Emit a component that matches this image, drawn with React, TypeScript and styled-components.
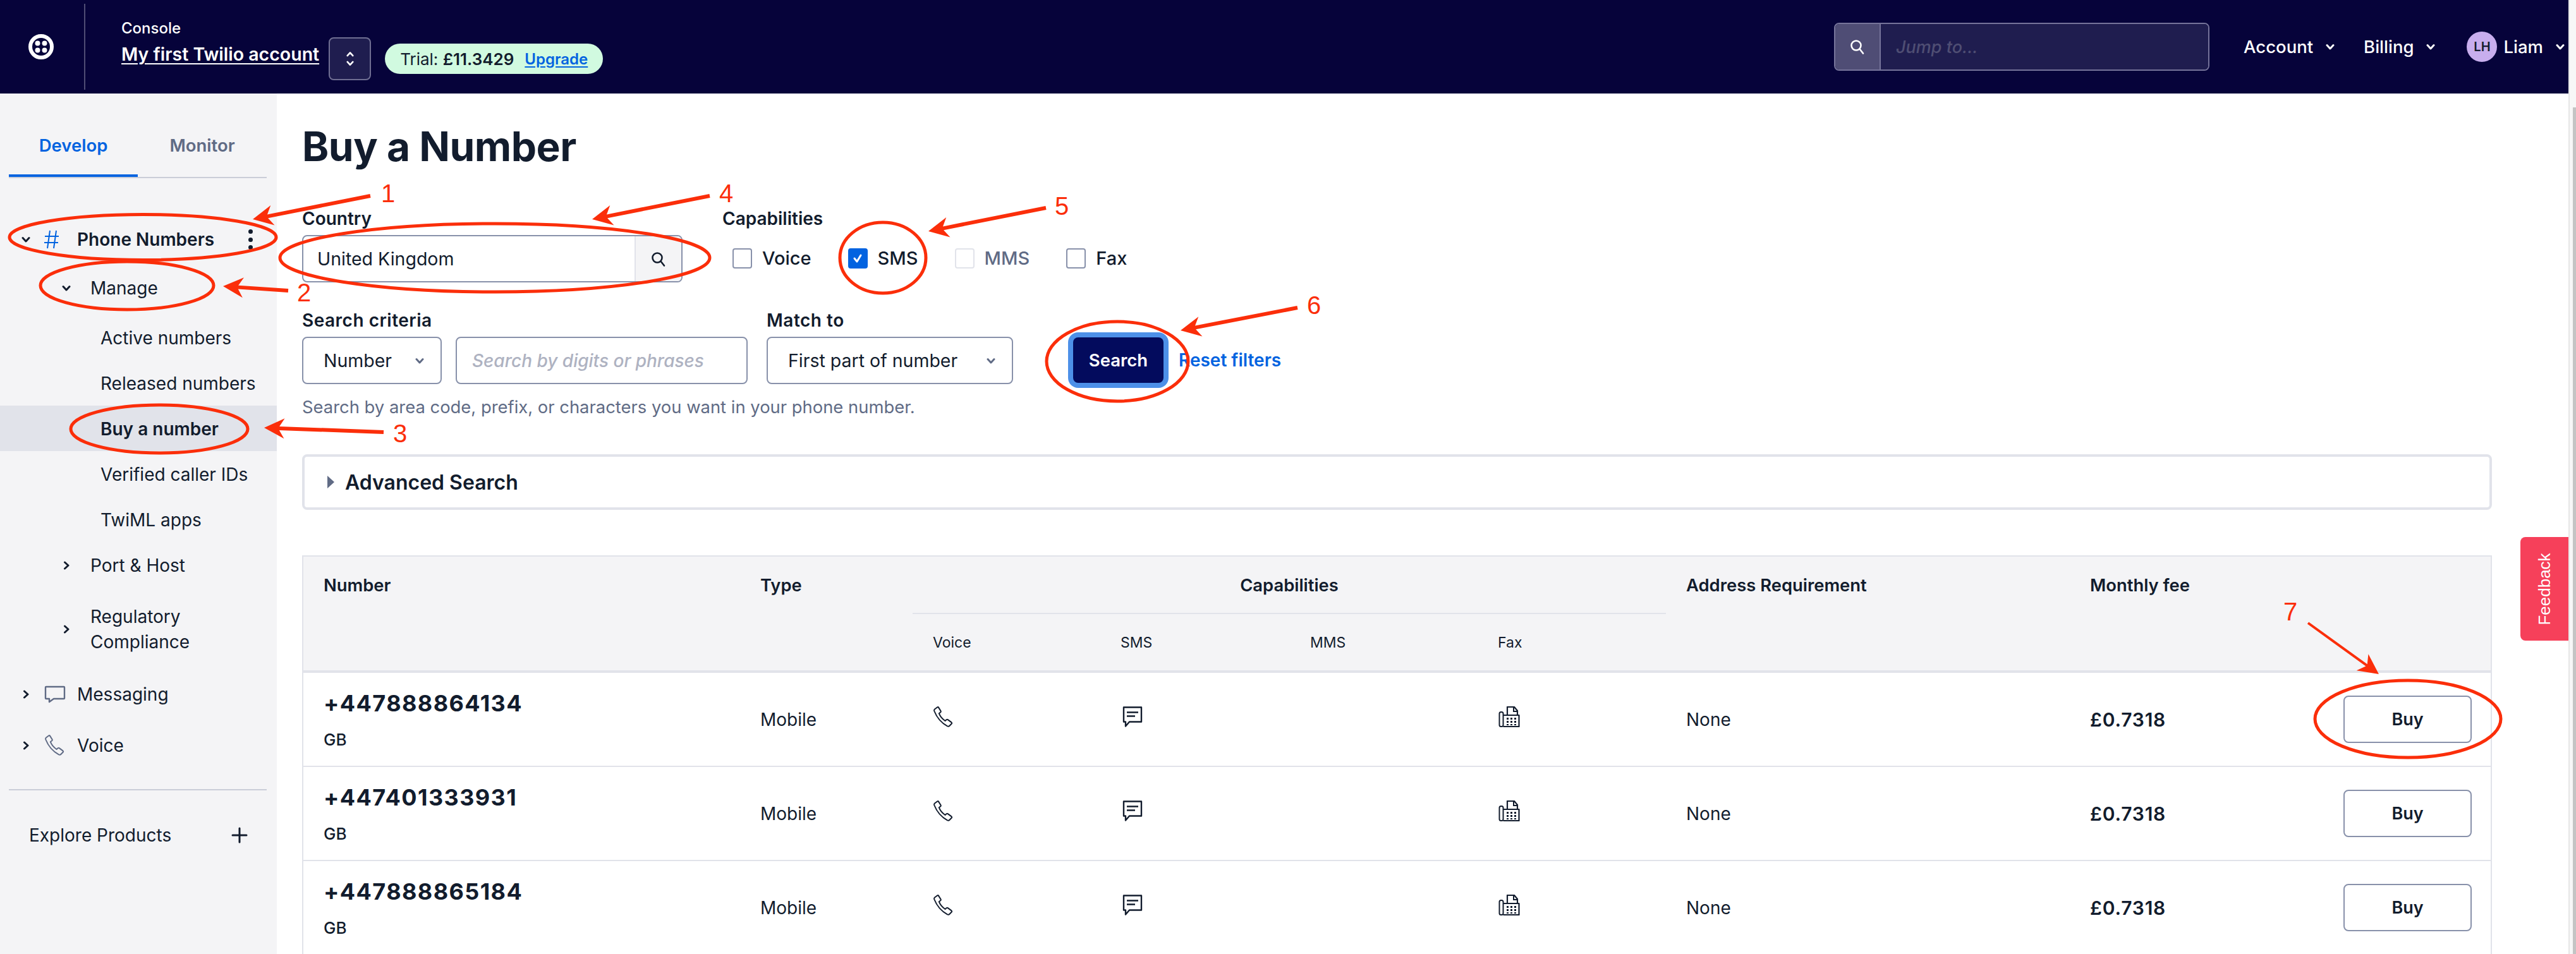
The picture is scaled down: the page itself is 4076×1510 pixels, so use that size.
import React from 'react'
import styled, { createGlobalStyle } from 'styled-components'

const GlobalStyle = createGlobalStyle`
  html, body {
    margin: 0;
    padding: 0;
    background: #fff;
    overflow: hidden;
  }
  * {
    box-sizing: border-box;
  }
  body {
    font-family: 'Inter', 'Noto Sans', sans-serif;
    color: #121c2d;
  }
`

const INK = '#121c2d'
const SLATE = '#606b85'
const LINE = '#e1e3ea'
const FIELD = '#8891aa'
const BLUE = '#0263e0'
const RED = '#fb2e0a'

type IconProps = { color?: string; size?: number }

const Chevron = ({ dir = 'down', color = INK, size = 14 }: IconProps & { dir?: 'down' | 'right' | 'up' }) => {
  const d = dir === 'down' ? 'M2 4.5 7 10l5-5.5' : dir === 'up' ? 'M2 9.5 7 4l5 5.5' : 'M4.5 2 10 7l-5.5 5'
  return (
    <svg width={size} height={size} viewBox="0 0 14 14" fill="none">
      <path d={d} stroke={color} strokeWidth="3" strokeLinecap="round" strokeLinejoin="round" />
    </svg>
  )
}

const SearchIcon = ({ color = INK, size = 26 }: IconProps) => (
  <svg width={size} height={size} viewBox="0 0 26 26" fill="none">
    <circle cx="11" cy="11" r="7.5" stroke={color} strokeWidth="2.6" />
    <path d="M16.5 16.5 22 23.5" stroke={color} strokeWidth="2.6" strokeLinecap="round" />
  </svg>
)

const PhoneIcon = ({ color = INK, size = 34 }: IconProps) => (
  <svg width={size} height={size} viewBox="0 0 34 34" fill="none">
    <path
      d="M3 4.5 7 1.5c.8-.5 1.6-.4 2.1.4l3.4 5.4c.4.7.3 1.4-.3 2L9.8 11.2c1.500 4 5.500 9 9.700 11.800l2.300-1.900c.7-.5 1.400-.5 2 0l5.700 4.300c.7.600.8 1.400.2 2.100l-3.200 3.300c-.9.900-2.200 1.100-3.500.5C14 26.500 6.500 18 2.300 7.500 1.900 6.300 2.200 5.200 3 4.500Z"
      stroke={color}
      strokeWidth="2"
      strokeLinejoin="round"
    />
  </svg>
)

const BubbleIcon = ({ color = SLATE }: IconProps) => (
  <svg width="34" height="28" viewBox="0 0 34 28" fill="none">
    <path
      d="M3 2h28c.6 0 1 .4 1 1v17c0 .6-.4 1-1 1H15l-7 5v-5H3c-.6 0-1-.4-1-1V3c0-.6.4-1 1-1Z"
      stroke={color}
      strokeWidth="2.400"
      strokeLinejoin="round"
    />
  </svg>
)

const SmsIcon = () => (
  <svg width="32" height="33" viewBox="0 0 32 33" fill="none">
    <path d="M2 1.500h28v23H11l-6 7v-7H2Z" stroke={INK} strokeWidth="2.400" strokeLinejoin="round" />
    <path d="M7 9.500h18M7 15.500h13" stroke={INK} strokeWidth="2.400" />
  </svg>
)

const FaxIcon = () => (
  <svg width="34" height="33" viewBox="0 0 34 33" fill="none">
    <rect x="1.500" y="9" width="6" height="23" rx="2.500" stroke={INK} strokeWidth="2" />
    <path d="M7.500 14H32.500V32H7.500" stroke={INK} strokeWidth="2.200" strokeLinejoin="round" />
    <path d="M14 14V1h11l5 6v7" stroke={INK} strokeWidth="2.200" strokeLinejoin="round" />
    <path d="M24 1v7h6" stroke={INK} strokeWidth="2" />
    <path
      d="M13 18h3v3h-3zM19 18h3v3h-3zM25 18h3v3h-3zM13 23h3v3h-3zM19 23h3v3h-3zM25 23h3v3h-3zM13 28h3v2h-3zM19 28h3v2h-3zM25 28h3v2h-3z"
      fill={INK}
    />
  </svg>
)

const Logo = () => (
  <svg width="40" height="40" viewBox="0 0 40 40" fill="none">
    <circle cx="20" cy="20" r="17" stroke="#fff" strokeWidth="6" />
    <circle cx="14.500" cy="14.500" r="4" fill="#fff" />
    <circle cx="25.500" cy="14.500" r="4" fill="#fff" />
    <circle cx="14.500" cy="25.500" r="4" fill="#fff" />
    <circle cx="25.500" cy="25.500" r="4" fill="#fff" />
  </svg>
)

const HashIcon = () => (
  <svg width="24" height="30" viewBox="0 0 24 30" fill="none">
    <path d="M9 1 5 29M19 1l-4 28M1 10h22M0 20h22" stroke={BLUE} strokeWidth="2" />
  </svg>
)

const Shell = styled.div`
  display: flex;
  width: 4076px;
  height: 1510px;
  overflow: hidden;
  position: relative;
`

const Page = styled.div`
  flex: 1;
  min-width: 0;
  display: flex;
  flex-direction: column;
`

const ScrollTrack = styled.div`
  width: 12px;
  padding-top: 170px;
  display: flex;
  justify-content: flex-end;
  background: #f7f7f7;
  border-left: 2px solid #e6e6e6;
`

const ScrollThumb = styled.div`
  width: 5px;
  height: 100%;
  background: #c4c4c4;
`

const TopBar = styled.header`
  height: 148px;
  flex: none;
  display: flex;
  align-items: center;
  background: #06033a;
  color: #fff;
  padding-right: 6px;
`

const LogoSlot = styled.div`
  width: 135px;
  height: 136px;
  display: flex;
  align-items: center;
  justify-content: center;
  padding-right: 4px;
  border-right: 2px solid #4f4d75;
`

const AccountBlock = styled.div`
  margin: -15px 0 0 57px;
  display: flex;
  flex-direction: column;
`

const ConsoleLabel = styled.div`
  font-size: 24px;
  font-weight: 500;
  line-height: 30px;
  margin-bottom: 9px;
`

const AccountName = styled.div`
  font-size: 28.5px;
  font-weight: 600;
  line-height: 34px;
  text-decoration: underline;
  text-underline-offset: 4px;
  text-decoration-thickness: 2px;
`

const StepperButton = styled.div`
  width: 67px;
  height: 68px;
  margin: 38px 0 0 15px;
  display: flex;
  flex-direction: column;
  align-items: center;
  justify-content: center;
  gap: 2px;
  background: #1f1d4f;
  border: 2px solid #6f6e92;
  border-radius: 8px;
`

const TrialPill = styled.div`
  height: 48px;
  margin: 38px 0 0 22px;
  padding: 0 24px;
  display: flex;
  align-items: center;
  gap: 17px;
  border-radius: 24px;
  background: #d1fae0;
  color: ${INK};
  font-size: 26px;
  white-space: nowrap;
`

const TrialAmount = styled.span`
  font-weight: 600;
`

const UpgradeLink = styled.span`
  color: ${BLUE};
  font-size: 24px;
  font-weight: 600;
  text-decoration: underline;
  text-underline-offset: 3px;
`

const TopRight = styled.div`
  margin-left: auto;
  display: flex;
  align-items: center;
`

const JumpBox = styled.div`
  width: 594px;
  height: 76px;
  display: flex;
  border: 2px solid #76749a;
  border-radius: 8px;
  overflow: hidden;
  margin-right: 54px;
`

const JumpIcon = styled.div`
  width: 72px;
  display: flex;
  align-items: center;
  justify-content: center;
  background: #4f4d75;
  border-right: 2px solid #76749a;
`

const JumpInput = styled.div`
  flex: 1;
  display: flex;
  align-items: center;
  padding-left: 24px;
  background: #1f1d4f;
  color: #4f4e73;
  font-size: 27px;
  font-style: italic;
  font-weight: 500;
`

const TopMenu = styled.div<{ $gap?: number }>`
  display: flex;
  align-items: center;
  gap: 20px;
  margin-right: ${({ $gap }) => $gap ?? 0}px;
  font-size: 27.5px;
  font-weight: 500;
`

const Avatar = styled.div`
  width: 48px;
  height: 48px;
  margin-right: 10px;
  display: flex;
  align-items: center;
  justify-content: center;
  border-radius: 50%;
  background: #c8aeee;
  color: ${INK};
  font-size: 20px;
  font-weight: 600;
`

const Body = styled.div`
  flex: 1;
  min-height: 0;
  display: flex;
`

const Sidebar = styled.aside`
  width: 438px;
  flex: none;
  background: #f4f4f6;
  padding-top: 40px;
  display: flex;
  flex-direction: column;
`

const TabRow = styled.div`
  display: flex;
  margin: 0 16px 60px 14px;
  border-bottom: 2px solid #cacdd8;
`

const Tab = styled.div<{ $active?: boolean }>`
  width: 204px;
  height: 92px;
  padding-bottom: 5px;
  display: flex;
  align-items: center;
  justify-content: center;
  font-size: 27.5px;
  font-weight: 600;
  color: ${({ $active }) => ($active ? BLUE : SLATE)};
  border-bottom: 4px solid ${({ $active }) => ($active ? BLUE : 'transparent')};
`

const NavRow = styled.div<{ $level: number; $height?: number; $active?: boolean; $bold?: boolean; $top?: number }>`
  height: ${({ $height }) => $height ?? 72}px;
  margin-top: ${({ $top }) => $top ?? 0}px;
  flex: none;
  display: flex;
  align-items: center;
  padding-top: 2px;
  padding-left: ${({ $level }) => [34, 98, 159][$level]}px;
  font-size: 28px;
  line-height: 40px;
  font-weight: ${({ $bold }) => ($bold ? 600 : 400)};
  background: ${({ $active }) => ($active ? LINE : 'transparent')};
`

const ChevronSlot = styled.span`
  width: 45px;
  flex: none;
  display: flex;
`

const TopChevronSlot = styled.span`
  width: 36px;
  flex: none;
  display: flex;
`

const NavIcon = styled.span`
  width: 52px;
  flex: none;
  display: flex;
`

const Kebab = styled.span`
  margin-left: auto;
  margin-right: 38px;
  height: 32px;
  display: flex;
  flex-direction: column;
  justify-content: space-between;
`

const KebabDot = styled.span`
  width: 7px;
  height: 7px;
  border-radius: 50%;
  background: ${INK};
`

const SideDivider = styled.div`
  height: 2px;
  margin: 34px 16px 0 14px;
  background: #cacdd8;
`

const ExploreRow = styled.div`
  height: 72px;
  margin-top: 35px;
  display: flex;
  align-items: center;
  justify-content: space-between;
  padding: 0 46px;
  font-size: 28px;
`

const Main = styled.main`
  flex: 1;
  min-width: 0;
  padding: 44px 121px 0 40px;
`

const Title = styled.h1`
  margin: 0 0 56px;
  font-size: 64px;
  line-height: 80px;
  font-weight: 700;
  letter-spacing: -0.5px;
`

const FormRow = styled.div`
  display: flex;
  align-items: flex-end;
`

const Field = styled.div<{ $width?: number; $gap?: number }>`
  width: ${({ $width }) => ($width ? `${$width}px` : 'auto')};
  margin-right: ${({ $gap }) => $gap ?? 0}px;
  flex: none;
`

const FieldLabel = styled.div<{ $spacing?: number }>`
  font-size: 28px;
  line-height: 36px;
  font-weight: 600;
  margin-bottom: 8px;
  letter-spacing: ${({ $spacing }) => $spacing ?? 0}px;
  white-space: nowrap;
`

const InputBox = styled.div`
  height: 75px;
  display: flex;
  align-items: center;
  justify-content: space-between;
  border: 2px solid ${FIELD};
  border-radius: 8px;
  background: #fff;
  font-size: 28.5px;
  overflow: hidden;
  padding-left: 32px;
  padding-right: 26px;
`

const CountryBox = styled(InputBox)`
  padding: 0 0 0 22px;
`

const CountryAddon = styled.div`
  width: 74px;
  height: 100%;
  display: flex;
  align-items: center;
  justify-content: center;
  background: #f4f4f6;
  border-left: 2px solid ${LINE};
`

const Placeholder = styled.span`
  color: #aeb2c1;
  font-size: 28px;
  font-style: italic;
  font-weight: 500;
  margin-left: -8px;
`

const CheckGroup = styled.div`
  height: 75px;
  display: flex;
  align-items: center;
  gap: 58px;
  padding-left: 16px;
  padding-bottom: 2px;
`

const CheckItem = styled.div<{ $muted?: boolean }>`
  display: flex;
  align-items: center;
  gap: 16px;
  font-size: 29px;
  font-weight: 500;
  color: ${({ $muted }) => ($muted ? SLATE : INK)};
`

const CheckBox = styled.span<{ $checked?: boolean; $disabled?: boolean }>`
  width: 31px;
  height: 32px;
  display: flex;
  align-items: center;
  justify-content: center;
  border-radius: 4px;
  background: ${({ $checked }) => ($checked ? BLUE : '#fff')};
  border: 2px solid ${({ $checked, $disabled }) => ($checked ? BLUE : $disabled ? LINE : FIELD)};
`

const SearchRow = styled(FormRow)`
  margin-top: 42px;
`

const SearchButton = styled.div`
  width: 143px;
  height: 72px;
  margin: 0 24px 2px 95px;
  flex: none;
  display: flex;
  align-items: center;
  justify-content: center;
  background: #030b5d;
  color: #fff;
  border-radius: 8px;
  box-shadow: 0 0 0 8px #4d90e8;
  font-size: 27.5px;
  font-weight: 600;
`

const ResetLink = styled.div`
  height: 72px;
  margin-bottom: 2px;
  display: flex;
  align-items: center;
  color: ${BLUE};
  font-size: 28px;
  font-weight: 600;
`

const HelpText = styled.div`
  margin-top: 18px;
  font-size: 27.4px;
  line-height: 36px;
  color: ${SLATE};
`

const AdvancedBox = styled.div`
  height: 88px;
  margin-top: 57px;
  display: flex;
  align-items: center;
  gap: 17px;
  padding-left: 36px;
  border: 4px solid ${LINE};
  border-radius: 8px;
  font-size: 32px;
  font-weight: 600;
`

const Triangle = styled.span`
  width: 0;
  height: 0;
  border-style: solid;
  border-width: 10px 0 10px 11px;
  border-color: transparent transparent transparent ${SLATE};
`

const Table = styled.table`
  width: 100%;
  margin-top: 72px;
  table-layout: fixed;
  border-collapse: separate;
  border-spacing: 0;
  border: solid ${LINE};
  border-width: 2px 2px 0 2px;
  font-size: 28px;
`

const HeadCell = styled.th<{ $center?: boolean }>`
  height: 91px;
  padding: 0 0 0 32px;
  background: #f4f4f6;
  text-align: ${({ $center }) => ($center ? 'center' : 'left')};
  font-size: 27.4px;
  font-weight: 600;
  vertical-align: middle;
`

const SpanCell = styled(HeadCell)`
  border-bottom: 4px solid ${LINE};
  vertical-align: top;
  padding-top: 28px;
`

const CapabilityCell = styled(HeadCell)`
  border-bottom: 2px solid ${LINE};
  padding: 0;
`

const SubHeadCell = styled(HeadCell)`
  height: 93px;
  font-size: 23px;
  font-weight: 400;
  border-bottom: 4px solid ${LINE};
`

const Cell = styled.td`
  height: 149px;
  padding: 0 0 0 32px;
  border-bottom: 2px solid ${LINE};
  vertical-align: middle;
`

const ActionCell = styled(Cell)`
  padding: 0 30px 0 0;
  text-align: right;
`

const PhoneNumber = styled.div`
  font-size: 36px;
  line-height: 44px;
  font-weight: 700;
  letter-spacing: 1.4px;
`

const Region = styled.div`
  margin-top: 20px;
  font-size: 26px;
  line-height: 32px;
  font-weight: 500;
`

const Fee = styled.span`
  font-size: 30px;
  font-weight: 600;
  letter-spacing: 0.8px;
`

const BuyButton = styled.button`
  width: 203px;
  height: 75px;
  border: 2px solid ${FIELD};
  border-radius: 8px;
  background: #fff;
  color: ${INK};
  font-family: inherit;
  font-size: 27px;
  font-weight: 600;
`

const CellIcon = styled.span<{ $left?: number }>`
  display: inline-flex;
  vertical-align: middle;
  margin: -12px 0 0 ${({ $left }) => $left ?? 0}px;
`

const FeedbackTab = styled.div`
  position: absolute;
  top: 850px;
  right: 12px;
  width: 76px;
  height: 164px;
  display: flex;
  align-items: center;
  justify-content: center;
  border-radius: 8px 0 0 8px;
  background: #f6405a;
  color: #fff;
  font-family: 'Liberation Sans', sans-serif;
  font-size: 26px;
`

const FeedbackText = styled.span`
  transform: rotate(-90deg);
  white-space: nowrap;
`

const Overlay = styled.svg`
  position: absolute;
  inset: 0;
  pointer-events: none;
`

const CalloutText = styled.text`
  font-family: 'Liberation Sans', sans-serif;
  font-size: 40px;
  fill: ${RED};
`

type Point = [number, number]

const ellipses = [
  [226, 375.5, 211, 36],
  [201, 452, 137, 38],
  [252, 679, 140, 38],
  [783, 408, 340, 54],
  [1397, 408, 68, 56],
  [1768, 572, 112, 63],
  [3810, 1138, 147, 61],
]

const arrows: { from: Point; to: Point; width?: number }[] = [
  { from: [586, 310], to: [400, 347] },
  { from: [456, 460], to: [353, 453] },
  { from: [607, 684], to: [418, 677] },
  { from: [1123, 310], to: [937, 347] },
  { from: [1655, 329], to: [1469, 366] },
  { from: [2053, 487], to: [1868, 523] },
  { from: [3652, 986], to: [3764, 1067], width: 4 },
]

const callouts = [
  ['1', 603, 320],
  ['2', 470, 477],
  ['3', 622, 700],
  ['4', 1138, 320],
  ['5', 1669, 340],
  ['6', 2068, 497],
  ['7', 3613, 982],
] as const

const arrowPoints = (from: Point, to: Point, width = 6) => {
  const len = Math.hypot(to[0] - from[0], to[1] - from[1])
  const ux = (to[0] - from[0]) / len
  const uy = (to[1] - from[1]) / len
  const at = (along: number, side: number) =>
    `${to[0] - ux * along - uy * side},${to[1] - uy * along + ux * side}`
  const half = width / 2
  return [
    `${from[0] - uy * half},${from[1] + ux * half}`,
    at(24, half),
    at(32, 16),
    at(0, 0),
    at(32, -16),
    at(24, -half),
    `${from[0] + uy * half},${from[1] - ux * half}`,
  ].join(' ')
}

const Annotations = () => (
  <Overlay width="4076" height="1510" viewBox="0 0 4076 1510">
    {ellipses.map(([cx, cy, rx, ry]) => (
      <ellipse key={cx} cx={cx} cy={cy} rx={rx} ry={ry} fill="none" stroke={RED} strokeWidth="5" />
    ))}
    {arrows.map(({ from, to, width }) => (
      <polygon key={from[0]} points={arrowPoints(from, to, width)} fill={RED} />
    ))}
    {callouts.map(([label, x, y]) => (
      <CalloutText key={label} x={x} y={y}>
        {label}
      </CalloutText>
    ))}
  </Overlay>
)

const leafItems = ['Active numbers', 'Released numbers', 'Buy a number', 'Verified caller IDs', 'TwiML apps']

const checks = [
  { label: 'Voice' },
  { label: 'SMS', checked: true },
  { label: 'MMS', disabled: true },
  { label: 'Fax' },
]

const numbers = ['+447888864134', '+447401333931', '+447888865184']

function App() {
  return (
    <Shell>
      <GlobalStyle />
      <Page>
        <TopBar>
          <LogoSlot>
            <Logo />
          </LogoSlot>
          <AccountBlock>
            <ConsoleLabel>Console</ConsoleLabel>
            <AccountName>My first Twilio account</AccountName>
          </AccountBlock>
          <StepperButton>
            <Chevron dir="up" color="#fff" size={12} />
            <Chevron color="#fff" size={12} />
          </StepperButton>
          <TrialPill>
            <span>
              Trial: <TrialAmount>£11.3429</TrialAmount>
            </span>
            <UpgradeLink>Upgrade</UpgradeLink>
          </TrialPill>
          <TopRight>
            <JumpBox>
              <JumpIcon>
                <SearchIcon color="#fff" />
              </JumpIcon>
              <JumpInput>Jump to...</JumpInput>
            </JumpBox>
            <TopMenu $gap={46}>
              Account <Chevron color="#fff" />
            </TopMenu>
            <TopMenu $gap={50}>
              Billing <Chevron color="#fff" />
            </TopMenu>
            <Avatar>LH</Avatar>
            <TopMenu>
              Liam <Chevron color="#fff" />
            </TopMenu>
          </TopRight>
        </TopBar>
        <Body>
          <Sidebar>
            <TabRow>
              <Tab $active>Develop</Tab>
              <Tab>Monitor</Tab>
            </TabRow>
            <NavRow $level={0} $bold>
              <TopChevronSlot>
                <Chevron />
              </TopChevronSlot>
              <NavIcon>
                <HashIcon />
              </NavIcon>
              Phone Numbers
              <Kebab>
                <KebabDot />
                <KebabDot />
                <KebabDot />
              </Kebab>
            </NavRow>
            <NavRow $level={1} $top={5}>
              <ChevronSlot>
                <Chevron />
              </ChevronSlot>
              Manage
            </NavRow>
            {leafItems.map((item, i) => (
              <NavRow key={item} $level={2} $top={i === 0 ? 7 : 0} $active={i === 2} $bold={i === 2}>
                {item}
              </NavRow>
            ))}
            <NavRow $level={1}>
              <ChevronSlot>
                <Chevron dir="right" />
              </ChevronSlot>
              Port &amp; Host
            </NavRow>
            <NavRow $level={1} $height={130}>
              <ChevronSlot>
                <Chevron dir="right" />
              </ChevronSlot>
              <span>
                Regulatory
                <br />
                Compliance
              </span>
            </NavRow>
            <NavRow $level={0} $height={76}>
              <TopChevronSlot>
                <Chevron dir="right" />
              </TopChevronSlot>
              <NavIcon>
                <BubbleIcon />
              </NavIcon>
              Messaging
            </NavRow>
            <NavRow $level={0} $top={7}>
              <TopChevronSlot>
                <Chevron dir="right" />
              </TopChevronSlot>
              <NavIcon>
                <PhoneIcon color={SLATE} />
              </NavIcon>
              Voice
            </NavRow>
            <SideDivider />
            <ExploreRow>
              Explore Products
              <svg width="26" height="26" viewBox="0 0 26 26" fill="none">
                <path d="M13 2v22M2 13h22" stroke={INK} strokeWidth="3" strokeLinecap="round" />
              </svg>
            </ExploreRow>
          </Sidebar>
          <Main>
            <Title>Buy a Number</Title>
            <FormRow>
              <Field $width={602} $gap={63}>
                <FieldLabel>Country</FieldLabel>
                <CountryBox>
                  United Kingdom
                  <CountryAddon>
                    <SearchIcon />
                  </CountryAddon>
                </CountryBox>
              </Field>
              <Field>
                <FieldLabel>Capabilities</FieldLabel>
                <CheckGroup>
                  {checks.map(({ label, checked, disabled }) => (
                    <CheckItem key={label} $muted={disabled}>
                      <CheckBox $checked={checked} $disabled={disabled}>
                        {checked && (
                          <svg width="18" height="18" viewBox="0 0 18 18" fill="none">
                            <path d="m4 9 4 5 6-10" stroke="#fff" strokeWidth="3" strokeLinecap="round" strokeLinejoin="round" />
                          </svg>
                        )}
                      </CheckBox>
                      {label}
                    </CheckItem>
                  ))}
                </CheckGroup>
              </Field>
            </FormRow>
            <SearchRow>
              <Field $width={221} $gap={22}>
                <FieldLabel $spacing={0.5}>Search criteria</FieldLabel>
                <InputBox>
                  Number
                  <Chevron color={SLATE} />
                </InputBox>
              </Field>
              <Field $width={462} $gap={30}>
                <InputBox>
                  <Placeholder>Search by digits or phrases</Placeholder>
                </InputBox>
              </Field>
              <Field $width={390}>
                <FieldLabel $spacing={0.5}>Match to</FieldLabel>
                <InputBox>
                  First part of number
                  <Chevron color={SLATE} />
                </InputBox>
              </Field>
              <SearchButton>Search</SearchButton>
              <ResetLink>Reset filters</ResetLink>
            </SearchRow>
            <HelpText>Search by area code, prefix, or characters you want in your phone number.</HelpText>
            <AdvancedBox>
              <Triangle />
              Advanced Search
            </AdvancedBox>
            <Table>
              <colgroup>
                <col style={{ width: 691 }} />
                <col style={{ width: 273 }} />
                <col style={{ width: 297 }} />
                <col style={{ width: 300 }} />
                <col style={{ width: 297 }} />
                <col style={{ width: 298 }} />
                <col style={{ width: 639 }} />
                <col style={{ width: 325 }} />
                <col />
              </colgroup>
              <thead>
                <tr>
                  <SpanCell rowSpan={2}>Number</SpanCell>
                  <SpanCell rowSpan={2}>Type</SpanCell>
                  <CapabilityCell colSpan={4} $center>
                    Capabilities
                  </CapabilityCell>
                  <SpanCell rowSpan={2}>Address Requirement</SpanCell>
                  <SpanCell rowSpan={2} colSpan={2}>
                    Monthly fee
                  </SpanCell>
                </tr>
                <tr>
                  <SubHeadCell>Voice</SubHeadCell>
                  <SubHeadCell>SMS</SubHeadCell>
                  <SubHeadCell>MMS</SubHeadCell>
                  <SubHeadCell>Fax</SubHeadCell>
                </tr>
              </thead>
              <tbody>
                {numbers.map((number) => (
                  <tr key={number}>
                    <Cell>
                      <PhoneNumber>{number}</PhoneNumber>
                      <Region>GB</Region>
                    </Cell>
                    <Cell>Mobile</Cell>
                    <Cell>
                      <CellIcon>
                        <PhoneIcon />
                      </CellIcon>
                    </Cell>
                    <Cell>
                      <CellIcon $left={3}>
                        <SmsIcon />
                      </CellIcon>
                    </Cell>
                    <Cell />
                    <Cell>
                      <CellIcon $left={1}>
                        <FaxIcon />
                      </CellIcon>
                    </Cell>
                    <Cell>None</Cell>
                    <Cell>
                      <Fee>£0.7318</Fee>
                    </Cell>
                    <ActionCell>
                      <BuyButton>Buy</BuyButton>
                    </ActionCell>
                  </tr>
                ))}
              </tbody>
            </Table>
          </Main>
        </Body>
      </Page>
      <ScrollTrack>
        <ScrollThumb />
      </ScrollTrack>
      <FeedbackTab>
        <FeedbackText>Feedback</FeedbackText>
      </FeedbackTab>
      <Annotations />
    </Shell>
  )
}

export default App
